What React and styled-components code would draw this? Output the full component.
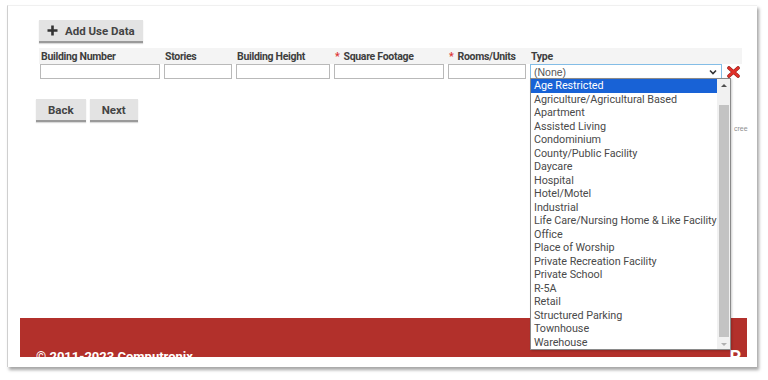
import React from "react";
import styled, { createGlobalStyle } from "styled-components";

const Global = createGlobalStyle`
  html, body {
    margin: 0;
    padding: 0;
    background: #fff;
  }
  body {
    font-family: Roboto, "Liberation Sans", Arial, sans-serif;
    width: 768px;
    height: 380px;
    overflow: hidden;
  }
`;

const Frame = styled.div`
  position: relative;
  margin: 5px 0 0 7px;
  width: 750px;
  height: 362px;
  background: #fff;
  border-left: 1px solid #cfcfcf;
  border-top: 1px solid #f0f0f0;
  box-shadow: 2px 3px 3px rgba(0, 0, 0, 0.35);
  display: flex;
  flex-direction: column;
  overflow: hidden;
  box-sizing: border-box;
`;

const Content = styled.div`
  padding: 14px 0 0 31px;
  display: flex;
  flex-direction: column;
  align-items: flex-start;
`;

const Button = styled.button`
  display: inline-flex;
  align-items: center;
  gap: 7px;
  height: 23px;
  padding: 0 ${(p) => p.$pad || 12}px;
  margin-left: ${(p) => p.$shift || 0}px;
  border: none;
  border-bottom: 2px solid #9a9a9a;
  background: #e3e3e3;
  color: #444;
  font-family: Roboto, "Liberation Sans", Arial, sans-serif;
  font-weight: 700;
  font-size: 11.5px;
  box-sizing: border-box;
  box-shadow: 0 1px 1px rgba(0, 0, 0, 0.15);
`;

const Grid = styled.div`
  margin-top: 5px;
  width: 703px;
`;

const HeaderRow = styled.div`
  display: flex;
  gap: 4px;
  height: 16px;
  background: #f4f4f4;
  align-items: center;
`;

const Label = styled.div`
  width: ${(p) => p.$w}px;
  flex: none;
  padding-left: 2px;
  box-sizing: border-box;
  font-size: 10.5px;
  font-weight: 700;
  color: #3e3e3e;
  letter-spacing: -0.3px;
  white-space: nowrap;
`;

const Star = styled.span`
  color: #d33;
  margin-right: 4px;
`;

const InputRow = styled.div`
  display: flex;
  gap: 4px;
  padding-left: 1px;
  align-items: center;
`;

const Field = styled.div`
  width: ${(p) => p.$w}px;
  height: 15px;
  flex: none;
  border: 1px solid #b9b9b9;
  background: #fff;
  box-sizing: border-box;
`;

const SelectWrap = styled.div`
  position: relative;
  width: 192px;
  flex: none;
`;

const Select = styled.div`
  height: 15px;
  border: 1px solid #84bde6;
  box-sizing: border-box;
  display: flex;
  align-items: center;
  justify-content: space-between;
  padding: 0 4px 0 3px;
  font-family: "Liberation Sans", Arial, sans-serif;
  font-size: 10.5px;
  color: #555;
`;

const Remove = styled.span`
  margin-left: 1px;
  display: inline-flex;
`;

const Actions = styled.div`
  display: flex;
  gap: 4px;
  margin-top: 20px;
  margin-left: -3px;
`;

const List = styled.div`
  position: absolute;
  top: 14px;
  left: 0;
  width: 201px;
  height: 272px;
  border: 1px solid #8a8a8a;
  background: #fff;
  box-sizing: border-box;
  display: flex;
  box-shadow: 1px 1px 2px rgba(0, 0, 0, 0.2);
  z-index: 2;
`;

const Options = styled.div`
  flex: 1;
  display: flex;
  flex-direction: column;
  overflow: hidden;
`;

const Option = styled.div`
  height: 13.5px;
  line-height: 13.5px;
  padding-left: 3px;
  font-family: Roboto, "Liberation Sans", Arial, sans-serif;
  font-size: 10.8px;
  letter-spacing: -0.05px;
  white-space: nowrap;
  color: ${(p) => (p.$active ? "#fff" : "#4a4a4a")};
  background: ${(p) => (p.$active ? "#1862d6" : "transparent")};
`;

const Scrollbar = styled.div`
  width: 13px;
  background: #f1f1f1;
  display: flex;
  flex-direction: column;
  align-items: center;
  padding: 5px 0 3px;
  box-sizing: border-box;
`;

const Arrow = styled.div`
  width: 0;
  height: 0;
  border-left: 3px solid transparent;
  border-right: 3px solid transparent;
  ${(p) =>
    p.$down
      ? "border-top: 3px solid #b0b0b0;"
      : "border-bottom: 3px solid #505050;"}
`;

const Thumb = styled.div`
  width: 10px;
  flex: 1;
  margin: 18px 0 6px;
  background: #c3c3c3;
`;

const Hint = styled.span`
  position: absolute;
  left: 726px;
  top: 119px;
  font-family: "Liberation Sans", Arial, sans-serif;
  font-size: 7px;
  color: #8f8f8f;
`;

const Footer = styled.footer`
  margin: auto 10px 10px 12px;
  height: 39px;
  background: #b2302b;
  color: #fff;
  overflow: hidden;
  display: flex;
  justify-content: space-between;
  align-items: flex-start;
  padding: 31px 6px 0 16px;
  box-sizing: border-box;
  font-family: Roboto, "Liberation Sans", Arial, sans-serif;
  font-weight: 700;
  font-size: 13px;
  line-height: 16px;
`;

const Logo = styled.span`
  font-size: 18px;
`;

const types = [
  "Age Restricted",
  "Agriculture/Agricultural Based",
  "Apartment",
  "Assisted Living",
  "Condominium",
  "County/Public Facility",
  "Daycare",
  "Hospital",
  "Hotel/Motel",
  "Industrial",
  "Life Care/Nursing Home & Like Facility",
  "Office",
  "Place of Worship",
  "Private Recreation Facility",
  "Private School",
  "R-5A",
  "Retail",
  "Structured Parking",
  "Townhouse",
  "Warehouse",
];

const columns = [
  { label: "Building Number", w: 120 },
  { label: "Stories", w: 68 },
  { label: "Building Height", w: 94 },
  { label: "Square Footage", w: 110, req: true },
  { label: "Rooms/Units", w: 78, req: true },
  { label: "Type", w: 192 },
];

function PlusIcon() {
  return (
    <svg width="11" height="11" viewBox="0 0 11 11">
      <path d="M5.5 0.5v10M0.5 5.5h10" stroke="#333" strokeWidth="2.6" />
    </svg>
  );
}

function RemoveIcon() {
  return (
    <svg width="13" height="12" viewBox="0 0 13 12">
      <path
        d="M2 2l9 8M11 2l-9 8"
        stroke="#8e1a14"
        strokeWidth="3.6"
        strokeLinecap="round"
      />
      <path
        d="M2 2l9 8M11 2l-9 8"
        stroke="#e0302a"
        strokeWidth="2.4"
        strokeLinecap="round"
      />
    </svg>
  );
}

function Chevron() {
  return (
    <svg width="8" height="6" viewBox="0 0 8 6">
      <path d="M1 1.5l3 3 3-3" fill="none" stroke="#333" strokeWidth="1.6" />
    </svg>
  );
}

export default function App() {
  return (
    <>
      <Global />
      <Frame>
        <Content>
          <Button $pad={8}>
            <PlusIcon />
            Add Use Data
          </Button>
          <Grid>
            <HeaderRow>
              {columns.map((c) => (
                <Label key={c.label} $w={c.w}>
                  {c.req && <Star>*</Star>}
                  {c.label}
                </Label>
              ))}
            </HeaderRow>
            <InputRow>
              {columns.slice(0, 5).map((c) => (
                <Field key={c.label} $w={c.w} />
              ))}
              <SelectWrap>
                <Select>
                  <span>(None)</span>
                  <Chevron />
                </Select>
                <List>
                  <Options>
                    {types.map((t, i) => (
                      <Option key={t} $active={i === 0}>
                        {t}
                      </Option>
                    ))}
                  </Options>
                  <Scrollbar>
                    <Arrow />
                    <Thumb />
                    <Arrow $down />
                  </Scrollbar>
                </List>
              </SelectWrap>
              <Remove>
                <RemoveIcon />
              </Remove>
            </InputRow>
          </Grid>
          <Actions>
            <Button>Back</Button>
            <Button>Next</Button>
          </Actions>
        </Content>
        <Hint>cree</Hint>
        <Footer>
          <span>© 2011-2023 Computronix</span>
          <Logo>P</Logo>
        </Footer>
      </Frame>
    </>
  );
}
